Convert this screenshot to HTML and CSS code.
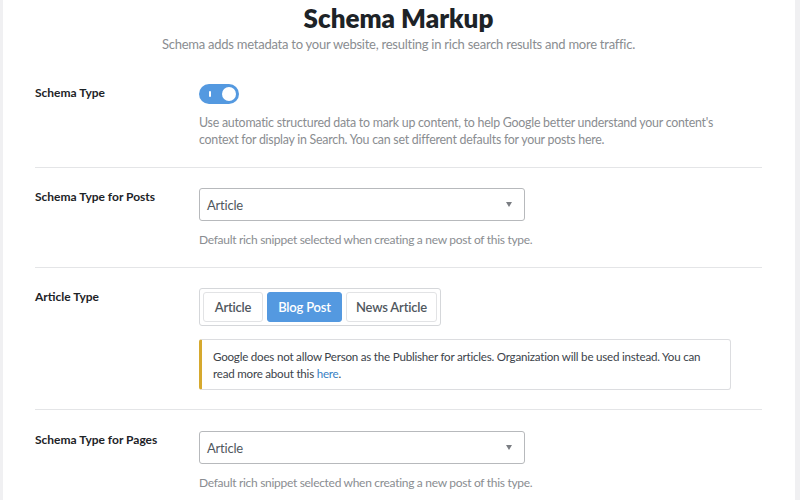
FILE: index.html
```html
<!DOCTYPE html>
<html lang="en">
<head>
<meta charset="utf-8">
<title>Schema Markup</title>
<link rel="stylesheet" href="styles.css">
</head>
<body>
<div class="card">
  <header class="head">
    <h1 class="title">Schema Markup</h1>
    <p class="subtitle">Schema adds metadata to your website, resulting in rich search results and more traffic.</p>
  </header>

  <section class="row row-first">
    <div class="label">Schema Type</div>
    <div class="field">
      <div class="toggle"><span class="toggle-bar"></span><span class="toggle-knob"></span></div>
      <p class="desc desc-toggle">Use automatic structured data to mark up content, to help Google better understand your content's context for display in Search. You can set different defaults for your posts here.</p>
    </div>
  </section>

  <section class="row">
    <div class="label">Schema Type for Posts</div>
    <div class="field">
      <div class="select"><span>Article</span><span class="caret"></span></div>
      <p class="desc desc-small">Default rich snippet selected when creating a new post of this type.</p>
    </div>
  </section>

  <section class="row">
    <div class="label">Article Type</div>
    <div class="field">
      <div class="btn-group">
        <span class="btn btn-article">Article</span>
        <span class="btn btn-blog btn-active">Blog Post</span>
        <span class="btn btn-news">News Article</span>
      </div>
      <div class="notice">Google does not allow Person as the Publisher for articles. Organization will be used instead. You can read more about this <a class="link" href="#">here</a>.</div>
    </div>
  </section>

  <section class="row row-last">
    <div class="label">Schema Type for Pages</div>
    <div class="field">
      <div class="select"><span>Article</span><span class="caret"></span></div>
      <p class="desc desc-small">Default rich snippet selected when creating a new post of this type.</p>
    </div>
  </section>
</div>
</body>
</html>
```
FILE: styles.css
```css
* { box-sizing: border-box; }
html, body { margin: 0; padding: 0; }
body {
  background: #f0f0f2;
  font-family: Lato, "Open Sans", "Liberation Sans", sans-serif;
  color: #1d2327;
  height: 500px;
  overflow: hidden;
}
.card {
  margin-left: 3px;
  width: 792px;
  min-height: 500px;
  background: #ffffff;
  padding: 0 33px 0 32px;
}
.head {
  text-align: center;
  padding-top: 2px;
}
.title {
  margin: 0;
  font-size: 26px;
  line-height: 32px;
  font-weight: 800;
  color: #1d2327;
}
.subtitle {
  margin: 1px 0 0;
  font-size: 13px;
  line-height: 18px;
  letter-spacing: -0.25px;
  color: #8a8d91;
}
.row {
  display: grid;
  grid-template-columns: 164px 1fr;
  padding: 20px 0 19px;
  border-bottom: 1px solid #e4e5e7;
}
.row-first { padding-top: 31px; }
.row-last { border-bottom: none; padding-top: 21px; }
.label {
  font-size: 12px;
  line-height: 17px;
  font-weight: 700;
  color: #1d2327;
}
.field { min-width: 0; }
.toggle {
  position: relative;
  width: 40px;
  height: 20px;
  border-radius: 10px;
  background: #5499e0;
}
.toggle-bar {
  position: absolute;
  left: 10px;
  top: 7px;
  width: 2px;
  height: 6px;
  background: #ffffff;
  border-radius: 1px;
}
.toggle-knob {
  position: absolute;
  right: 3px;
  top: 3px;
  width: 14px;
  height: 14px;
  border-radius: 50%;
  background: #ffffff;
}
.desc {
  margin: 10px 0 0;
  font-size: 12.4px;
  line-height: 17px;
  letter-spacing: -0.25px;
  color: #8a8d91;
}
.desc-small {
  font-size: 12px;
  letter-spacing: -0.3px;
}
.desc-toggle { margin-top: 10px; max-width: 525px; }
.select {
  width: 326px;
  height: 33px;
  border: 1px solid #b7b9bc;
  border-radius: 3px;
  display: flex;
  align-items: center;
  justify-content: space-between;
  padding: 0 12px 0 7px;
  font-size: 13px;
  letter-spacing: -0.2px;
  color: #50575e;
}
.caret {
  width: 0;
  height: 0;
  border-left: 3px solid transparent;
  border-right: 3px solid transparent;
  border-top: 5px solid #7a7d82;
}
.btn-group {
  display: inline-flex;
  gap: 4px;
  padding: 3px;
  border: 1px solid #d5d7da;
  border-radius: 3px;
}
.btn {
  height: 30px;
  display: flex;
  align-items: center;
  justify-content: center;
  white-space: nowrap;
  border: 1px solid #e2e3e5;
  border-radius: 3px;
  font-size: 13px;
  font-weight: 600;
  letter-spacing: -0.2px;
  color: #50575e;
}
.btn-article { width: 60px; }
.btn-blog { width: 75px; }
.btn-news { width: 91px; }
.btn-active {
  background: #5499e0;
  border-color: #5499e0;
  color: #ffffff;
}
.notice {
  margin-top: 13px;
  width: 532px;
  border: 1px solid #dcdde0;
  border-left: 3px solid #d6a92e;
  border-radius: 3px;
  padding: 8px 12px 7px 11px;
  font-size: 11.6px;
  line-height: 17px;
  letter-spacing: -0.22px;
  color: #3c434a;
}
.link { color: #3a7fc4; text-decoration: none; }
```
